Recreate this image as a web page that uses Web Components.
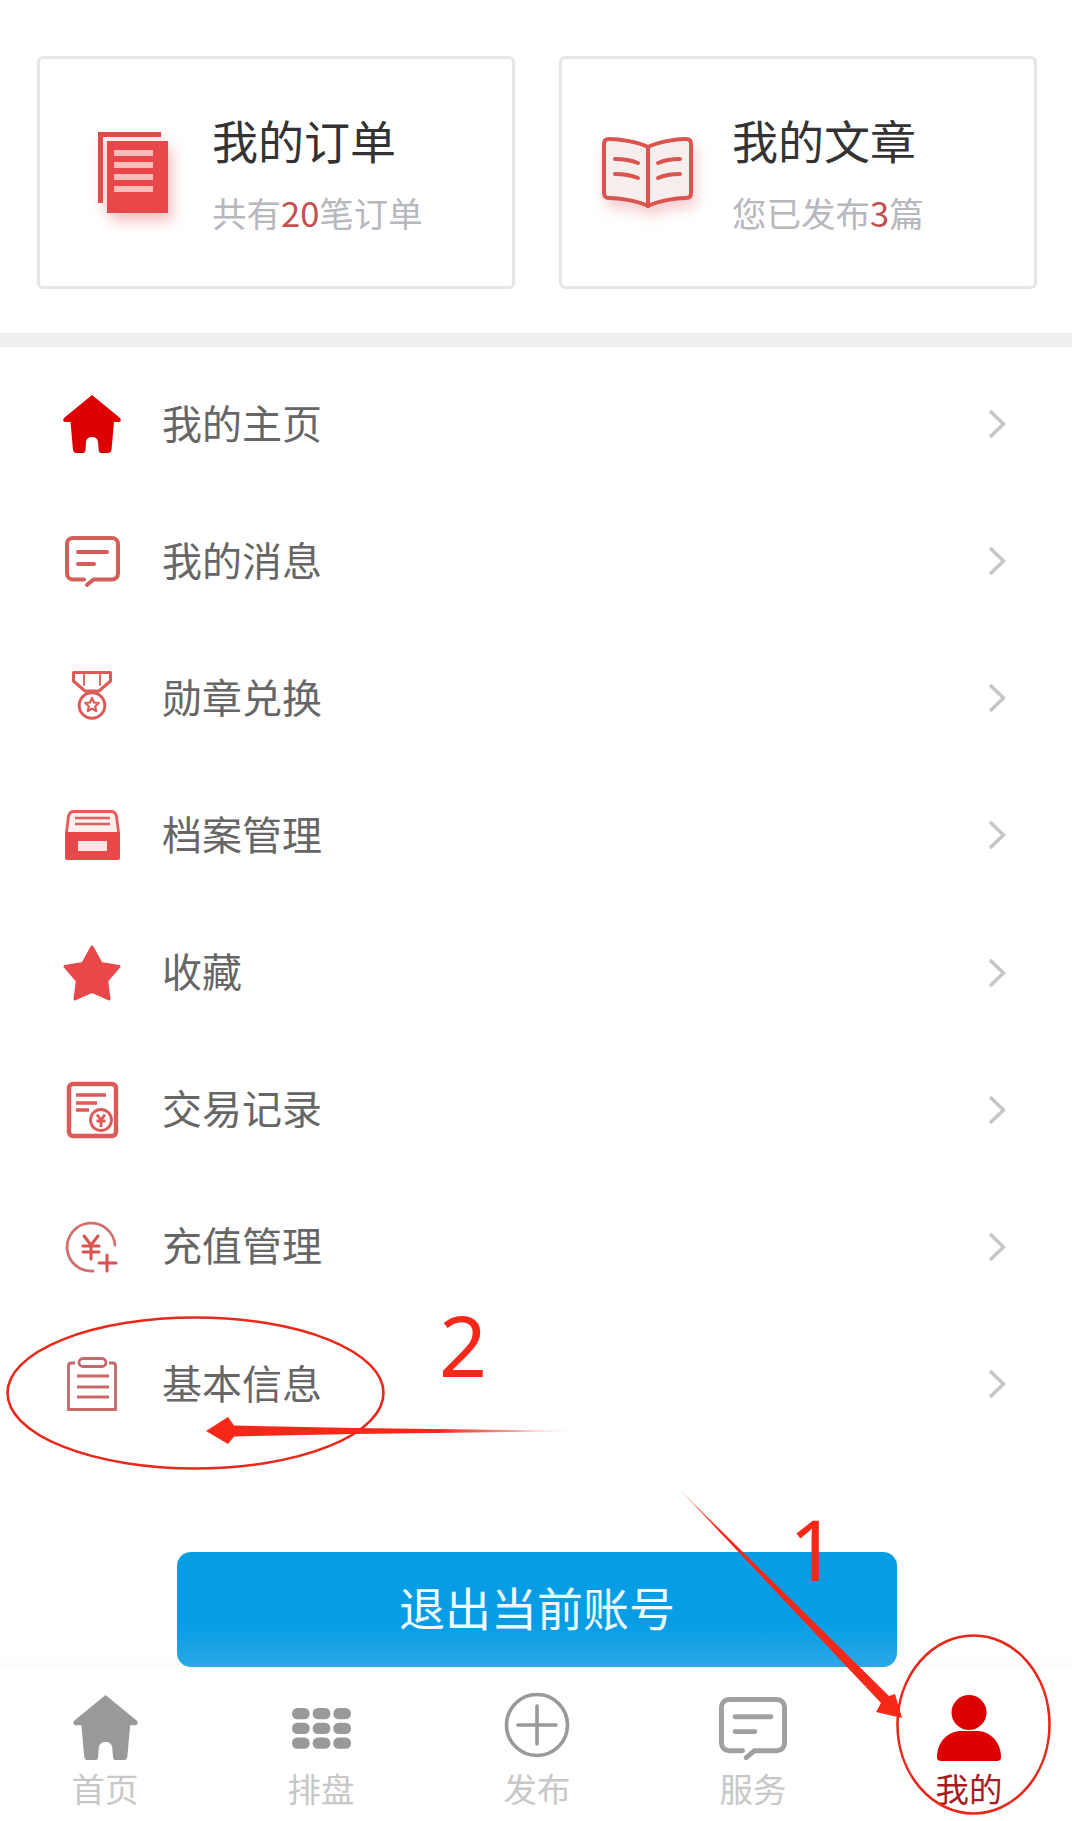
<!DOCTYPE html>
<html lang="zh-CN">
<head>
<meta charset="utf-8">
<title>我的</title>
<style>
html,body{margin:0;padding:0;background:#fff}
body{font-family:"Noto Sans CJK SC","Noto Sans",sans-serif}
</style>
</head>
<body>
<app-page>
  <section-cards>
    <stat-card style="--pad:58px;--gap:44px">
      <app-icon slot="icon" name="doc"></app-icon>
      <span slot="title">我的订单</span>
      共有<b-num>20</b-num>笔订单
    </stat-card>
    <stat-card style="--pad:40px;--gap:39px">
      <app-icon slot="icon" name="book"></app-icon>
      <span slot="title">我的文章</span>
      您已发布<b-num>3</b-num>篇
    </stat-card>
  </section-cards>
  <menu-list>
    <menu-row><app-icon slot="icon" name="home" color="#dd0000"></app-icon>我的主页</menu-row>
    <menu-row><app-icon slot="icon" name="msg" color="#d65e5a"></app-icon>我的消息</menu-row>
    <menu-row><app-icon slot="icon" name="medal" style="margin-top:-6px"></app-icon>勋章兑换</menu-row>
    <menu-row><app-icon slot="icon" name="archive"></app-icon>档案管理</menu-row>
    <menu-row><app-icon slot="icon" name="star"></app-icon>收藏</menu-row>
    <menu-row><app-icon slot="icon" name="ledger"></app-icon>交易记录</menu-row>
    <menu-row><app-icon slot="icon" name="charge"></app-icon>充值管理</menu-row>
    <menu-row><app-icon slot="icon" name="clip"></app-icon>基本信息</menu-row>
  </menu-list>
  <logout-button>退出当前账号</logout-button>
  <tab-bar>
    <tab-item><app-icon slot="icon" name="home" color="#999999" size="65"></app-icon>首页</tab-item>
    <tab-item><app-icon slot="icon" name="grid" size="59"></app-icon>排盘</tab-item>
    <tab-item><app-icon slot="icon" name="plus" style="margin-top:-6px"></app-icon>发布</tab-item>
    <tab-item><app-icon slot="icon" name="msg" color="#a0a0a0" size="68"></app-icon>服务</tab-item>
    <tab-item active><app-icon slot="icon" name="person"></app-icon>我的</tab-item>
  </tab-bar>
  <anno-layer></anno-layer>
</app-page>
<script>
const ICONS = {
  home:{w:58,h:59,draw:c=>`<path fill="${c}" d="M29 0L57 23Q59 26 56 27L51 27L48.5 55Q48 58 45 58L38 58Q36 58 35.7 55L35 47Q34.5 42 29 42Q23.5 42 23 47L22.5 55Q22 58 20 58L13 58Q10.5 58 10 55L7.5 27L2 27Q-1 26 1 23Z"/>`},
  msg:{w:55,h:51,draw:c=>`<g fill="none" stroke="${c}" stroke-width="4" stroke-linecap="round" stroke-linejoin="round"><path d="M22 49L28.5 43.5H47a6 6 0 0 0 6-6V8a6 6 0 0 0-6-6H8a6 6 0 0 0-6 6V37.5a6 6 0 0 0 6 6H19"/><path d="M13 16H42M13 28H29"/></g>`},
  medal:{w:40,h:48,draw:()=>`<g fill="none" stroke="#de5a57" stroke-width="3" stroke-linejoin="round" stroke-linecap="round"><path d="M1.500 1.500H38.500V10L27 20H13L1.500 10Z"/><path d="M12 2.500V14M28 2.500V14" stroke-width="1.800"/><circle cx="20" cy="34.500" r="12.800"/><path stroke-width="2.200" d="M20 27L22 31.500L26.800 32L23.200 35.200L24.200 40L20 37.600L15.800 40L16.800 35.200L13.200 32L18 31.500Z"/></g>`},
  archive:{w:55,h:50,draw:()=>`<path fill="#e8484a" d="M0 22H55V48a2 2 0 0 1-2 2H2a2 2 0 0 1-2-2Z"/><rect x="13" y="31" width="29" height="10" fill="#fbe6e4"/><path fill="#fbeeec" stroke="#e35c59" stroke-width="2.800" d="M1.500 22L3.500 6Q4.500 1.500 9 1.500H46Q50.500 1.500 51.500 6L53.500 22"/><path stroke="#d9615e" stroke-width="2.400" d="M10 8H45M10 14H45"/>`},
  star:{w:58,h:58,draw:()=>`<path fill="#e8484a" stroke="#e8484a" stroke-width="3" stroke-linejoin="round" d="M29 3L38.100 19.500L56 22.500L43.700 36.800L46 55L29 47.500L12 55L14.300 36.800L2 22.500L19.900 19.500Z"/>`},
  ledger:{w:51,h:56,draw:()=>`<g fill="none" stroke="#dc5a57"><rect x="2" y="2" width="47" height="52" rx="4" stroke-width="4.400"/><path stroke-width="3.600" d="M9 13H39M9 21H30M9 28H22"/><circle cx="34" cy="38" r="10.500" stroke-width="2.800"/><path stroke-width="2.800" d="M30 32.500L34 38L38 32.500M29.500 39H38.500M34 38V45"/></g>`},
  charge:{w:52,h:52,draw:()=>`<g fill="none" stroke-linecap="round"><path stroke="#d4706c" stroke-width="2.800" d="M27 50A24 24 0 1 1 49 24"/><path stroke="#dc5050" stroke-width="3" d="M18 15L25 24L32 15M17 25H33M17 31H33M25 24V38"/><path stroke="#dc5050" stroke-width="3" d="M41 34V50M33 42H50"/></g>`},
  clip:{w:50,h:54,draw:()=>`<g fill="none" stroke="#c8686a" stroke-width="2.800"><path d="M8 6H4Q1.500 6 1.500 9V52.500H48.500V9Q48.500 6 46 6H42"/><rect x="12" y="1.500" width="27" height="8" rx="4"/><path d="M10 19H42M10 30H42M10 40H42"/></g>`},
  doc:{w:70,h:81,draw:()=>`<path fill="#e04a47" d="M0 0H63V5H5V71H0Z"/><rect x="9" y="9" width="61" height="72" fill="#e8484a"/><g fill="#f6bdb9"><rect x="16" y="18" width="39" height="6"/><rect x="16" y="30" width="39" height="6"/><rect x="16" y="42" width="39" height="6"/><rect x="16" y="54" width="39" height="6"/></g>`,css:"filter:drop-shadow(4px 8px 7px rgba(225,70,70,.35))"},
  book:{w:91,h:71,draw:()=>`<g stroke="#dc5450" stroke-width="4" stroke-linecap="round" stroke-linejoin="round"><path fill="#f6eeed" d="M46 10C36 5 18 2 7 2Q2 2 2 7V56Q2 61 7 61C18 61 36 64 46 69C56 64 73 61 84 61Q89 61 89 56V7Q89 2 84 2C73 2 56 5 46 10Z"/><path fill="none" d="M46 10V69M13 22Q26 22 36 26M13 37Q26 37 36 41M78 22Q65 22 56 26M78 37Q65 37 56 41"/></g>`,css:"filter:drop-shadow(3px 8px 7px rgba(220,80,80,.28))"},
  grid:{w:60,h:41,draw:()=>{let s='';for(const y of [0,15,30])for(const x of [0,21,42])s+=`<rect x="${x}" y="${y}" width="18" height="11.500" rx="5.500" fill="#999"/>`;return s}},
  plus:{w:66,h:66,draw:()=>`<g fill="none" stroke="#999" stroke-width="3.600" stroke-linecap="round"><circle cx="33" cy="33" r="30.500"/><path d="M33 14V52M14 33H52"/></g>`},
  person:{w:64,h:66,draw:()=>`<circle cx="32" cy="17.500" r="17.500" fill="#dd0000"/><path fill="#dd0000" d="M0 62C0 46 12 36 24 36H40C52 36 64 46 64 62Q64 66 60 66H4Q0 66 0 62Z"/>`}
};

class AppIcon extends HTMLElement{
  connectedCallback(){
    const i=ICONS[this.getAttribute('name')];
    const c=this.getAttribute('color')||'#e8484a';
    const w=+this.getAttribute('size')||i.w;
    const h=w*i.h/i.w;
    this.attachShadow({mode:'open'}).innerHTML=`<style>:host{display:block;line-height:0;flex:none}svg{display:block;overflow:visible;${i.css||''}}</style><svg xmlns="http://www.w3.org/2000/svg" width="${w}" height="${h}" viewBox="0 0 ${i.w} ${i.h}">${i.draw(c)}</svg>`;
  }
}
function def(name,html){
  customElements.define(name,class extends HTMLElement{
    constructor(){super();this.attachShadow({mode:'open'}).innerHTML=html}
  });
}
customElements.define('app-icon',AppIcon);

def('app-page',`<style>:host{position:relative;width:1072px;height:1821px;overflow:hidden;background:#fff;display:flex;flex-direction:column}</style><slot></slot>`);

def('section-cards',`<style>:host{display:grid;grid-template-columns:478px 478px;column-gap:44px;padding:56px 35px 44px 37px;border-bottom:14px solid #eeeeee}</style><slot></slot>`);

def('stat-card',`<style>
:host{display:flex;align-items:center;box-sizing:border-box;height:233px;border:3px solid #e6e6e8;border-radius:6px;padding-left:var(--pad);background:#fff}
.t{margin-left:var(--gap);padding-top:6px}
.h{font-size:46px;line-height:70px;margin-bottom:3px;color:#333;}
.s{font-size:34.500px;line-height:70px;color:#b6b8bd;white-space:nowrap}
</style><slot name="icon"></slot><div class="t"><div class="h"><slot name="title"></slot></div><div class="s"><slot></slot></div></div>`);

def('b-num',`<style>:host{display:inline;color:#c4504e}</style><slot></slot>`);

def('menu-list',`<style>:host{display:block;padding-top:8.500px}</style><slot></slot>`);

def('menu-row',`<style>
:host{display:flex;align-items:center;height:137.150px;font-size:40px;color:#666}
.i{width:58px;margin-left:63px;margin-right:41px;display:flex;justify-content:center;align-items:center}
.l{flex:1;padding-bottom:5px}
svg{margin-right:66px;display:block}
</style><div class="i"><slot name="icon"></slot></div><div class="l"><slot></slot></div>
<svg width="18" height="30" viewBox="0 0 18 30"><path d="M2 2L15.500 15L2 28" fill="none" stroke="#c6c6c6" stroke-width="3.600"/></svg>`);

def('logout-button',`<style>
:host{display:flex;position:relative;z-index:1;align-items:center;justify-content:center;box-sizing:border-box;width:720px;height:115px;margin:99.500px 0 0 177px;padding-bottom:7px;border-radius:14px;background:linear-gradient(#069de5 0,#069de5 62%,#2aa8e6 100%);color:#eefaff;font-size:46px}
</style><slot></slot>`);

def('tab-bar',`<style>
:host{display:grid;grid-template-columns:repeat(5,216px);justify-content:start;margin-left:-3px;height:154px;background:#fff;box-shadow:0 -6px 14px rgba(0,0,0,.025)}
</style><slot></slot>`);

customElements.define('tab-item',class extends HTMLElement{
  constructor(){super();this.attachShadow({mode:'open'}).innerHTML=`<style>
:host{display:flex;flex-direction:column;align-items:center;padding-top:26px;font-size:33.500px;line-height:50px;color:#c8c8c8}
:host([active]){color:#a31d22}
.i{height:70px;display:flex;align-items:center;justify-content:center}
</style><div class="i"><slot name="icon"></slot></div><div><slot></slot></div>`;}
});

def('anno-layer',`<style>
:host{position:absolute;left:0;top:0;width:1072px;height:1821px;z-index:5;pointer-events:none}
svg{position:absolute;left:0;top:0}
text{font-family:"Noto Sans",sans-serif;font-size:84px;fill:#f5281a}
</style>
<svg width="1072" height="1821" viewBox="0 0 1072 1821">
<defs>
<linearGradient id="g2" x1="578" x2="440" y1="0" y2="0" gradientUnits="userSpaceOnUse"><stop offset="0" stop-color="#f5281a" stop-opacity="0"/><stop offset="1" stop-color="#f5281a"/></linearGradient>
<linearGradient id="g1" x1="678" y1="1488" x2="720" y2="1531" gradientUnits="userSpaceOnUse"><stop offset="0" stop-color="#f5281a" stop-opacity=".3"/><stop offset="1" stop-color="#f5281a"/></linearGradient>
</defs>
<ellipse cx="195.500" cy="1393" rx="188" ry="75.500" fill="none" stroke="#e8281a" stroke-width="2.600"/>
<ellipse cx="973.500" cy="1724.500" rx="76" ry="89" fill="none" stroke="#e8281a" stroke-width="2.600"/>
<polygon fill="url(#g2)" points="578,1431 355,1428 234,1425.500 228,1417 206,1431 228,1444 234,1436.500 355,1434"/>
<polygon fill="url(#g1)" points="678,1488 889,1696 895,1694 902,1718 876,1712 881,1703"/>
<text x="439" y="1377">2</text>
<text x="789" y="1581">1</text>
</svg>`);
</script>
</body>
</html>
